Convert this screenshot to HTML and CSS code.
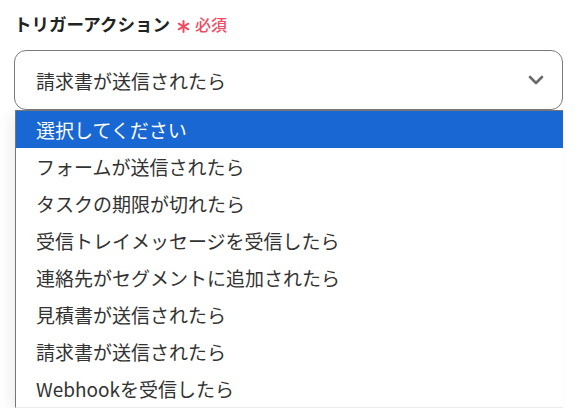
FILE: index.html
```html
<!DOCTYPE html>
<html lang="ja">
<head>
<meta charset="utf-8">
<link rel="stylesheet" href="styles.css">
</head>
<body>
<div class="field">
  <div class="label">トリガーアクション<span class="req"><svg class="ast" width="13" height="13" viewBox="0 0 13 13"><g stroke="#ee4b63" stroke-width="2" stroke-linecap="round"><path d="M6.5 1 V12"/><path d="M1.7 3.7 L11.3 9.3"/><path d="M1.7 9.3 L11.3 3.7"/></g></svg>必須</span></div>
  <div class="select">
    <span class="value">請求書が送信されたら</span>
    <svg class="chev" width="16" height="10" viewBox="0 0 16 10"><path d="M2 2 L8 8 L14 2" fill="none" stroke="#6b6b6b" stroke-width="2.6" stroke-linecap="round" stroke-linejoin="round"/></svg>
  </div>
  <ul class="menu">
    <li class="item selected">選択してください</li>
    <li class="item">フォームが送信されたら</li>
    <li class="item">タスクの期限が切れたら</li>
    <li class="item">受信トレイメッセージを受信したら</li>
    <li class="item">連絡先がセグメントに追加されたら</li>
    <li class="item">見積書が送信されたら</li>
    <li class="item">請求書が送信されたら</li>
    <li class="item">Webhookを受信したら</li>
  </ul>
</div>
</body>
</html>
```
FILE: styles.css
```css
html, body {
  margin: 0;
  padding: 0;
  background: #fff;
  font-family: "Noto Sans CJK JP", "Noto Sans", sans-serif;
}
.field {
  padding: 12px 0 0 14px;
  width: 549px;
}
.label {
  font-size: 17.5px;
  font-weight: 700;
  line-height: 24px;
  color: #222;
  display: flex;
  align-items: center;
}
.req {
  color: #ee4b63;
  font-size: 16px;
  font-weight: 500;
  margin-left: 7px;
  display: flex;
  align-items: center;
}
.ast {
  display: block;
  margin-right: 5px;
  margin-top: 5px;
}
.select {
  margin-top: 14px;
  height: 58px;
  border: 1px solid #7a7a7a;
  border-radius: 12px;
  display: flex;
  align-items: center;
  justify-content: space-between;
  padding: 0 18px 0 21px;
}
.value {
  font-size: 19px;
  color: #333;
}
.chev {
  display: block;
}
.menu {
  list-style: none;
  margin: 0 0 0 1px;
  padding: 0;
  border-top: 1px solid #767676;
  border-left: 1px solid #767676;
  border-bottom: 1px solid #ececec;
  box-shadow: -6px 4px 12px rgba(0, 0, 0, 0.06);
  background: #fff;
}
.item {
  height: 37px;
  line-height: 37px;
  padding-left: 20px;
  font-size: 19px;
  color: #333;
  white-space: nowrap;
}
.item.selected {
  background: #1967d2;
  color: #fff;
}
```
